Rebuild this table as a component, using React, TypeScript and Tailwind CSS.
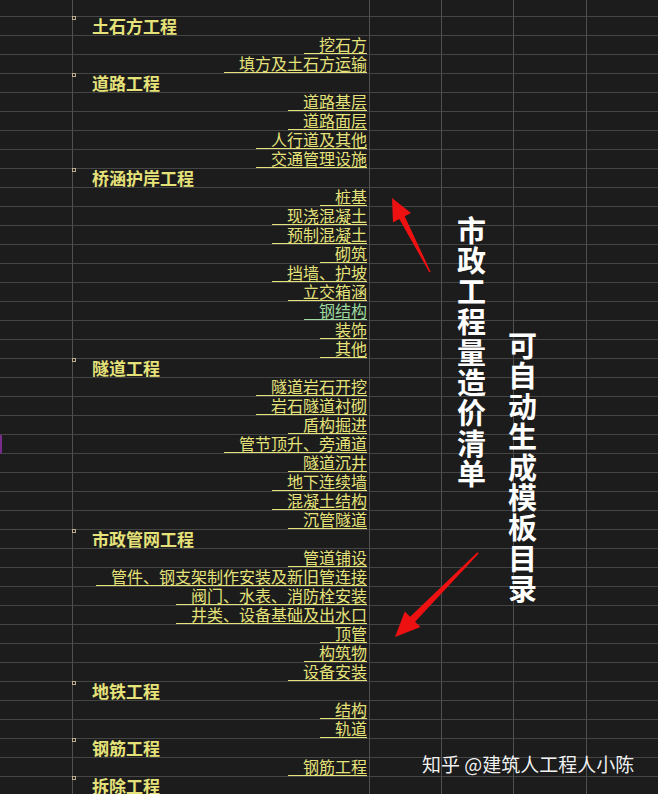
import React from "react";

type Row = { k: "h" | "i" | "e"; t?: string; g?: boolean };

const rows: Row[] = [
  { k: "h", t: "土石方工程" },
  { k: "i", t: "挖石方" },
  { k: "i", t: "填方及土石方运输" },
  { k: "h", t: "道路工程" },
  { k: "i", t: "道路基层" },
  { k: "i", t: "道路面层" },
  { k: "i", t: "人行道及其他" },
  { k: "i", t: "交通管理设施" },
  { k: "h", t: "桥涵护岸工程" },
  { k: "i", t: "桩基" },
  { k: "i", t: "现浇混凝土" },
  { k: "i", t: "预制混凝土" },
  { k: "i", t: "砌筑" },
  { k: "i", t: "挡墙、护坡" },
  { k: "i", t: "立交箱涵" },
  { k: "i", t: "钢结构", g: true },
  { k: "i", t: "装饰" },
  { k: "i", t: "其他" },
  { k: "h", t: "隧道工程" },
  { k: "i", t: "隧道岩石开挖" },
  { k: "i", t: "岩石隧道衬砌" },
  { k: "i", t: "盾构掘进" },
  { k: "i", t: "管节顶升、旁通道" },
  { k: "i", t: "隧道沉井" },
  { k: "i", t: "地下连续墙" },
  { k: "i", t: "混凝土结构" },
  { k: "i", t: "沉管隧道" },
  { k: "h", t: "市政管网工程" },
  { k: "i", t: "管道铺设" },
  { k: "i", t: "管件、钢支架制作安装及新旧管连接" },
  { k: "i", t: "阀门、水表、消防栓安装" },
  { k: "i", t: "井类、设备基础及出水口" },
  { k: "i", t: "顶管" },
  { k: "i", t: "构筑物" },
  { k: "i", t: "设备安装" },
  { k: "h", t: "地铁工程" },
  { k: "i", t: "结构" },
  { k: "i", t: "轨道" },
  { k: "h", t: "钢筋工程" },
  { k: "i", t: "钢筋工程" },
  { k: "h", t: "拆除工程" },
];

function GridRow({ row, idx, first }: { row?: Row; idx: number; first?: boolean }) {
  const h = first ? "h-[17px]" : "h-[19px]";
  return (
    <div className={`flex ${h} shrink-0`}>
      <div
        className={`w-[73px] shrink-0 border-b border-r border-b-[#454545] border-r-[#505050] ${
          idx === 23 ? "border-l-2 border-l-[#7a2a8a]" : ""
        }`}
      />
      <div className="relative w-[297px] shrink-0 border-b border-r border-b-[#454545] border-r-[#505050] flex items-end">
        {row && row.k === "h" && (
          <>
            <div className="absolute left-[-1px] top-[-1px] w-[4px] h-[4px] border border-[#bfae8e]" />
            <span className="pl-[19px] text-[17px] leading-[18px] font-bold text-[#e6e27a] whitespace-nowrap">
              {row.t}
            </span>
          </>
        )}
        {row && row.k === "i" && (
          <div className="flex w-full justify-end pr-[2px]">
            <span
              className={`pl-[15px] border-b text-[16px] leading-[17px] whitespace-nowrap ${
                row.g ? "border-[#9ed9a0] text-[#9ed9a0]" : "border-[#e6e27a] text-[#e6e27a]"
              }`}
            >
              {row.t}
            </span>
          </div>
        )}
      </div>
      <div className="w-[72px] shrink-0 border-b border-r border-b-[#454545] border-r-[#505050]" />
      <div className="w-[72px] shrink-0 border-b border-r border-b-[#454545] border-r-[#505050]" />
      <div className="w-[73px] shrink-0 border-b border-r border-b-[#454545] border-r-[#505050]" />
      <div className="flex-1 border-b border-b-[#454545]" />
    </div>
  );
}

function VText({ text, className }: { text: string; className: string }) {
  return (
    <div className={`absolute flex flex-col items-center text-white font-bold text-[29px] leading-[30.4px] ${className}`}>
      {text.split("").map((c, i) => (
        <span key={i}>{c}</span>
      ))}
    </div>
  );
}

export default function App() {
  return (
    <div className="relative w-[658px] h-[794px] overflow-hidden bg-[#1c1c1c] font-['Noto_Sans_CJK_SC','Noto_Sans',sans-serif]">
      <div className="flex flex-col">
        <GridRow idx={0} first />
        {rows.map((r, i) => (
          <GridRow key={i} row={r} idx={i + 1} />
        ))}
      </div>

      <svg className="absolute left-0 top-0" width="658" height="794" viewBox="0 0 658 794">
        <polygon
          points="392,198 411,213 404.7,216.2 430.6,271.8 429.4,272.4 399.3,219 393,222.5"
          fill="#ee1111"
        />
        <polygon
          points="395,637 404.8,611.5 410.1,616.7 477.5,552.3 478.7,553.5 415.1,621.7 420.4,626.9"
          fill="#ee1111"
        />
      </svg>

      <VText text="市政工程量造价清单" className="left-[457px] top-[214px]" />
      <VText text="可自动生成模板目录" className="left-[508px] top-[329px]" />

      <div className="absolute left-[422px] top-[752px] text-[19px] leading-[24px] text-white/95 whitespace-nowrap">
        知乎 @建筑人工程人小陈
      </div>
    </div>
  );
}
